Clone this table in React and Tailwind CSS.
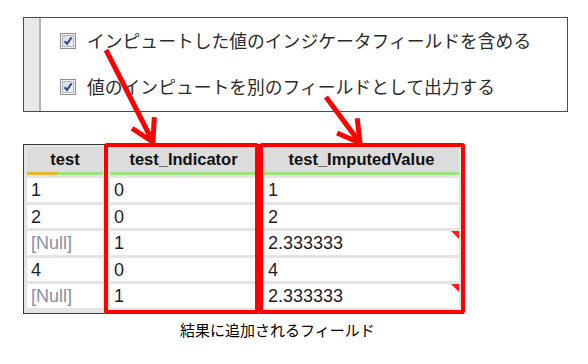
const jp = { fontFamily: '"Noto Sans CJK JP", "Noto Sans", sans-serif' };
const latin = { fontFamily: '"Liberation Sans", Arial, sans-serif' };

const rows = [
  { test: "1", ind: "0", val: "1" },
  { test: "2", ind: "0", val: "2" },
  { test: null, ind: "1", val: "2.333333", imputed: true },
  { test: "4", ind: "0", val: "4" },
  { test: null, ind: "1", val: "2.333333", imputed: true },
];

function Checkbox() {
  return (
    <svg width="16" height="16" viewBox="0 0 16 16" className="shrink-0">
      <defs>
        <linearGradient id="cb" x1="0" y1="0" x2="1" y2="1">
          <stop offset="0" stopColor="#d8d8e0" />
          <stop offset="1" stopColor="#f4f4f8" />
        </linearGradient>
      </defs>
      <rect x="0.5" y="0.5" width="15" height="15" fill="#f0f0f0" stroke="#8e8f8f" />
      <rect x="2.5" y="2.5" width="11" height="11" fill="url(#cb)" stroke="#b4b4be" />
      <path d="M4.6 8.2 L7 10.8 L11.6 4.4" fill="none" stroke="#2c4a9a" strokeWidth="2" />
    </svg>
  );
}

function Arrow({ x1, y1, x2, y2 }) {
  // open arrowhead, wings at ±30° off the shaft
  const dx = x1 - x2;
  const dy = y1 - y2;
  const len = Math.hypot(dx, dy);
  const ux = dx / len;
  const uy = dy / len;
  const wing = 25;
  const rot = (a) => [
    x2 + wing * (ux * Math.cos(a) - uy * Math.sin(a)),
    y2 + wing * (ux * Math.sin(a) + uy * Math.cos(a)),
  ];
  const [ax, ay] = rot(Math.PI / 6);
  const [bx, by] = rot(-Math.PI / 6);
  return (
    <g stroke="#ff0000" strokeWidth="5" fill="none" strokeLinejoin="miter">
      <line x1={x1} y1={y1} x2={x2} y2={y2} />
      <polyline points={`${ax},${ay} ${x2},${y2} ${bx},${by}`} />
    </g>
  );
}

function Cell({ children, muted, flag }) {
  return (
    <div
      className={`relative h-[23.5px] bg-white pl-[4px] text-[18px] leading-[24px] ${muted ? "text-[#8e8ea6]" : "text-[#1c1c2a]"}`}
    >
      {children}
      {flag && (
        <span className="absolute right-0 top-0 h-[8px] w-[8px] bg-[#ff1a1a] [clip-path:polygon(0_0,100%_0,100%_100%)]" />
      )}
    </div>
  );
}

function Header({ children, accent }) {
  return (
    <div className="flex flex-col">
      <div className="flex h-[25px] items-center justify-center bg-[#dcdcdc] text-[16.5px] font-bold text-[#111]">
        {children}
      </div>
      <div className="flex h-[3px]">
        {accent && <div className="w-[31px] bg-[#e8b62c]" />}
        <div className="flex-1 bg-[#9ee27e]" />
      </div>
    </div>
  );
}

export default function App() {
  return (
    <div className="relative h-[364px] w-[588px] overflow-hidden bg-white">
      {/* options panel */}
      <div className="ml-[23px] mt-[17px] flex h-[95px] w-[545px] border border-[#4a4a4a]" style={jp}>
        <div className="w-[17px] border-r-2 border-[#b4b4b4] bg-[#e8e8e8]" />
        <div className="flex flex-col pl-[19px] pt-[13px] text-[17.8px] text-[#2a2a2a]">
          <label className="flex h-[19px] items-center gap-[11px]">
            <Checkbox />
            インピュートした値のインジケータフィールドを含める
          </label>
          <label className="mt-[27px] flex h-[19px] items-center gap-[11px]">
            <Checkbox />
            値のインピュートを別のフィールドとして出力する
          </label>
        </div>
      </div>

      {/* result table */}
      <div
        className="ml-[23px] mt-[32px] w-[441px] border-y border-l border-[#3a3a3a] bg-[#e4e4e4] px-[3px] pb-[5px] pt-[2px]"
        style={latin}
      >
        <div className="grid grid-cols-[76px_147px_195px] gap-x-[7px]">
          <Header accent>test</Header>
          <Header>test_Indicator</Header>
          <Header>test_ImputedValue</Header>
        </div>
        <div className="mt-[3px] grid grid-cols-[76px_147px_195px] gap-x-[7px] gap-y-[3px]">
          {rows.map((r, i) => (
            <div key={i} className="contents">
              <Cell muted={r.test === null}>{r.test ?? "[Null]"}</Cell>
              <Cell>{r.ind}</Cell>
              <Cell flag={r.imputed}>{r.val}</Cell>
            </div>
          ))}
        </div>
      </div>

      <p className="ml-[180px] mt-[5px] text-[15px] leading-[22px] text-black" style={jp}>
        結果に追加されるフィールド
      </p>

      {/* highlight frames over the new columns */}
      <div className="absolute left-[104px] top-[143px] h-[171px] w-[155px] rounded-[3px] border-4 border-[#ff0000]" />
      <div className="absolute left-[259px] top-[143px] h-[171px] w-[206px] rounded-[3px] border-4 border-[#ff0000]" />

      <svg className="pointer-events-none absolute left-0 top-0" width="588" height="364">
        <Arrow x1={106} y1={50} x2={153} y2={142} />
        <Arrow x1={326} y1={97} x2={360} y2={143} />
      </svg>
    </div>
  );
}
